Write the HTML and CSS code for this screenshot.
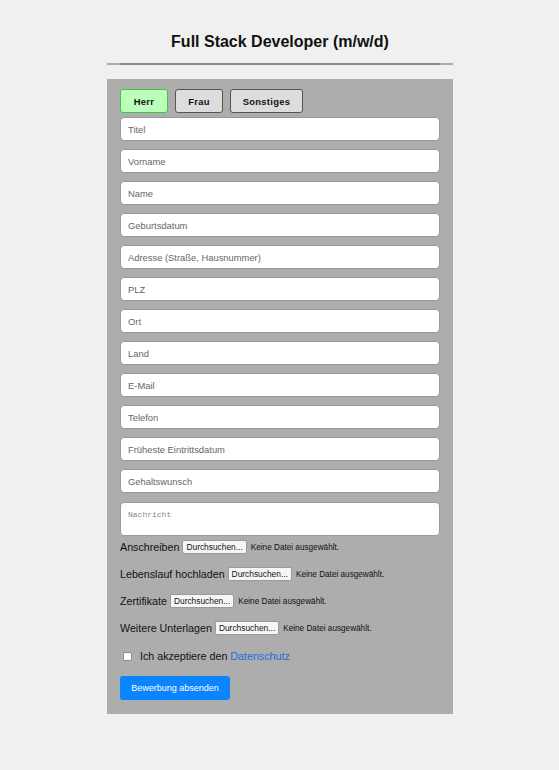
FILE: index.html
```html
<!DOCTYPE html>
<html lang="de">
<head>
<meta charset="utf-8">
<title>Full Stack Developer (m/w/d)</title>
<link rel="stylesheet" href="styles.css">
</head>
<body>
<div class="page">
  <h1 class="title">Full Stack Developer (m/w/d)</h1>
  <div class="rule"><div class="rule-inner"></div></div>
  <form class="panel">
    <div class="gender">
      <button type="button" class="gbtn active">Herr</button>
      <button type="button" class="gbtn">Frau</button>
      <button type="button" class="gbtn wide">Sonstiges</button>
    </div>
    <input class="field" type="text" placeholder="Titel">
    <input class="field" type="text" placeholder="Vorname">
    <input class="field" type="text" placeholder="Name">
    <input class="field" type="text" placeholder="Geburtsdatum">
    <input class="field" type="text" placeholder="Adresse (Straße, Hausnummer)">
    <input class="field" type="text" placeholder="PLZ">
    <input class="field" type="text" placeholder="Ort">
    <input class="field" type="text" placeholder="Land">
    <input class="field" type="text" placeholder="E-Mail">
    <input class="field" type="text" placeholder="Telefon">
    <input class="field" type="text" placeholder="Früheste Eintrittsdatum">
    <input class="field" type="text" placeholder="Gehaltswunsch">
    <textarea class="message" placeholder="Nachricht"></textarea>
    <div class="file-row"><span class="flabel">Anschreiben</span><button type="button" class="browse">Durchsuchen...</button><span class="nofile">Keine Datei ausgewählt.</span></div>
    <div class="file-row"><span class="flabel">Lebenslauf hochladen</span><button type="button" class="browse">Durchsuchen...</button><span class="nofile">Keine Datei ausgewählt.</span></div>
    <div class="file-row"><span class="flabel">Zertifikate</span><button type="button" class="browse">Durchsuchen...</button><span class="nofile">Keine Datei ausgewählt.</span></div>
    <div class="file-row"><span class="flabel">Weitere Unterlagen</span><button type="button" class="browse">Durchsuchen...</button><span class="nofile">Keine Datei ausgewählt.</span></div>
    <label class="consent"><input type="checkbox" class="check"><span>Ich akzeptiere den <a href="#" class="link">Datenschutz</a></span></label>
    <button type="button" class="submit">Bewerbung absenden</button>
  </form>
</div>
</body>
</html>
```
FILE: styles.css
```css
html, body {
  margin: 0;
  padding: 0;
  background: #f0f0f0;
  font-family: "Liberation Sans", Arial, sans-serif;
}

.page {
  width: 346px;
  margin: 0 auto;
  padding-left: 1px;
}

.title {
  margin: 0;
  padding-top: 33px;
  font-size: 16px;
  line-height: 18px;
  font-weight: bold;
  text-align: center;
  color: #111;
}

.rule {
  margin-top: 12px;
  height: 2px;
  background: #aaaaaa;
  padding: 0 13px;
}

.rule-inner {
  height: 2px;
  background: #888888;
}

.panel {
  margin-top: 14px;
  background: #adadad;
  padding: 10px 13px 14px 13px;
  display: flex;
  flex-direction: column;
  align-items: flex-start;
}

.gender {
  display: flex;
  gap: 7px;
  margin-bottom: 4px;
}

.gbtn {
  box-sizing: border-box;
  width: 48px;
  height: 24px;
  padding: 0;
  border: 1.5px solid #555;
  border-radius: 3px;
  background: #dddddd;
  font-family: "Liberation Sans", Arial, sans-serif;
  font-size: 9.4px;
  font-weight: bold;
  letter-spacing: 0.3px;
  color: #111;
}

.gbtn.active {
  background: #bbffbb;
  border-color: #44c444;
}

.gbtn.wide {
  width: 73px;
}

.field {
  box-sizing: border-box;
  width: 320px;
  height: 24px;
  margin: 0 0 8px 0;
  padding: 0 7px;
  border: 1px solid #999;
  border-radius: 4px;
  background: #fff;
  font-family: "Liberation Sans", Arial, sans-serif;
  font-size: 9.4px;
  color: #222;
  outline: none;
}

.field::placeholder {
  color: #666;
}

.message {
  box-sizing: border-box;
  width: 320px;
  height: 34px;
  margin: 1px 0 4px 0;
  padding: 7px 7px;
  border: 1px solid #999;
  border-radius: 4px;
  background: #fff;
  resize: none;
  font-family: "Liberation Mono", "Courier New", monospace;
  font-size: 8px;
  outline: none;
}

.message::placeholder {
  color: #888;
}

.file-row {
  display: flex;
  align-items: center;
  height: 14px;
  margin-bottom: 13px;
  color: #111;
}

.flabel {
  font-size: 10.7px;
  margin-right: 3px;
}

.browse {
  box-sizing: border-box;
  height: 14px;
  padding: 0 3px;
  border: 1px solid #9a9a9a;
  border-radius: 2px;
  background: #f6f6f6;
  font-family: "Liberation Sans", Arial, sans-serif;
  font-size: 8.4px;
  color: #111;
  margin-right: 4px;
}

.nofile {
  font-size: 8.2px;
}

.consent {
  display: flex;
  align-items: center;
  height: 14px;
  margin: 1px 0 13px 0;
  font-size: 10.7px;
  color: #111;
}

.check {
  appearance: none;
  -webkit-appearance: none;
  box-sizing: border-box;
  width: 9px;
  height: 9px;
  margin: 0 8px 0 3px;
  border: 1px solid #8a8a9a;
  border-radius: 2px;
  background: #fff;
}

.link {
  color: #1a6fd8;
  text-decoration: none;
}

.submit {
  width: 110px;
  height: 24px;
  padding: 0;
  border: none;
  border-radius: 3px;
  background: #0a84ff;
  color: #fff;
  font-family: "Liberation Sans", Arial, sans-serif;
  font-size: 9px;
}
```
